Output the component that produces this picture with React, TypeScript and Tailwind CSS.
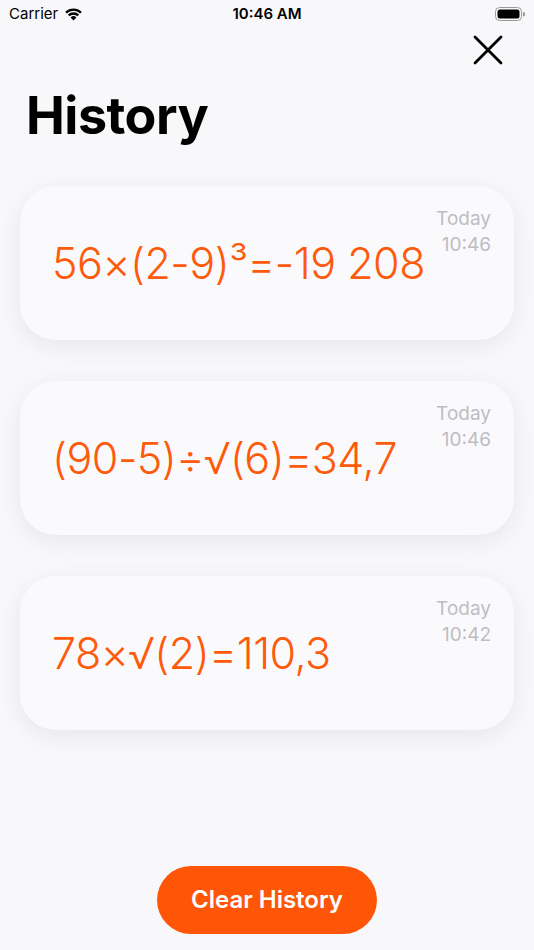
import React from "react";

const entries = [
  { expr: "56×(2-9)³=-19 208", day: "Today", time: "10:46" },
  { expr: "(90-5)÷√(6)=34,7", day: "Today", time: "10:46" },
  { expr: "78×√(2)=110,3", day: "Today", time: "10:42" },
];

function StatusBar() {
  return (
    <div className="relative flex h-[28px] items-center justify-between px-[9px] text-[15px] text-black">
      <div className="flex items-center gap-[6px]">
        <span>Carrier</span>
        <svg width="19" height="14" viewBox="0 0 19 14">
          <path d="M9.5 13.5 L6.6 10.4 A4.2 4.2 0 0 1 12.4 10.4 Z" fill="black" />
          <path d="M3.9 7.6 A8 8 0 0 1 15.1 7.6 L13.5 9.3 A5.7 5.7 0 0 0 5.5 9.3 Z" fill="black" />
          <path d="M1.2 4.8 A11.8 11.8 0 0 1 17.8 4.8 L16.2 6.5 A9.5 9.5 0 0 0 2.8 6.5 Z" fill="black" />
        </svg>
      </div>
      <span className="absolute left-1/2 -translate-x-1/2 font-semibold">10:46 AM</span>
      <svg width="30" height="15" viewBox="0 0 30 15">
        <rect x="0.5" y="0.5" width="26" height="13" rx="4" fill="none" stroke="#9a9a9a" strokeWidth="1" />
        <rect x="2.5" y="2.5" width="22" height="9" rx="2.5" fill="black" />
        <path d="M28 5 A2 2 0 0 1 28 9.5 Z" fill="#9a9a9a" />
      </svg>
    </div>
  );
}

export default function App() {
  return (
    <div
      className="flex h-[950px] w-[534px] flex-col overflow-hidden bg-[#f8f8fa]"
      style={{ fontFamily: "Inter, 'Noto Sans', sans-serif" }}
    >
      <StatusBar />

      {/* close */}
      <div className="flex justify-end pr-[31px] pt-[7px]">
        <svg width="30" height="30" viewBox="0 0 30 30">
          <path d="M2 2 L28 28 M28 2 L2 28" stroke="black" strokeWidth="2.8" strokeLinecap="round" />
        </svg>
      </div>

      <h1 className="mt-[19px] pl-[26px] text-[52px] font-bold leading-[64px] tracking-[-0.5px] text-black">
        History
      </h1>

      <div className="mt-[38px] flex flex-col gap-[41px] px-[20px]">
        {entries.map((e, i) => (
          <div
            key={i}
            className="flex h-[154px] items-start justify-between rounded-[36px] bg-[#fafafc] pl-[32px] pr-[23px] pt-[20px] shadow-[0_6px_24px_rgba(0,0,0,0.07)]"
          >
            <div className="mt-[31px] text-[43px] font-light leading-[52px] tracking-[-0.5px] text-[#fe5a0c]">
              {e.expr}
            </div>
            <div className="text-right text-[19px] leading-[26px] text-[#bdbdc2]">
              <div>{e.day}</div>
              <div>{e.time}</div>
            </div>
          </div>
        ))}
      </div>

      <div className="mt-auto flex justify-center pb-[16px]">
        <button className="h-[68px] w-[220px] rounded-full bg-[#fe5507] text-[24px] font-semibold text-white">
          Clear History
        </button>
      </div>
    </div>
  );
}
